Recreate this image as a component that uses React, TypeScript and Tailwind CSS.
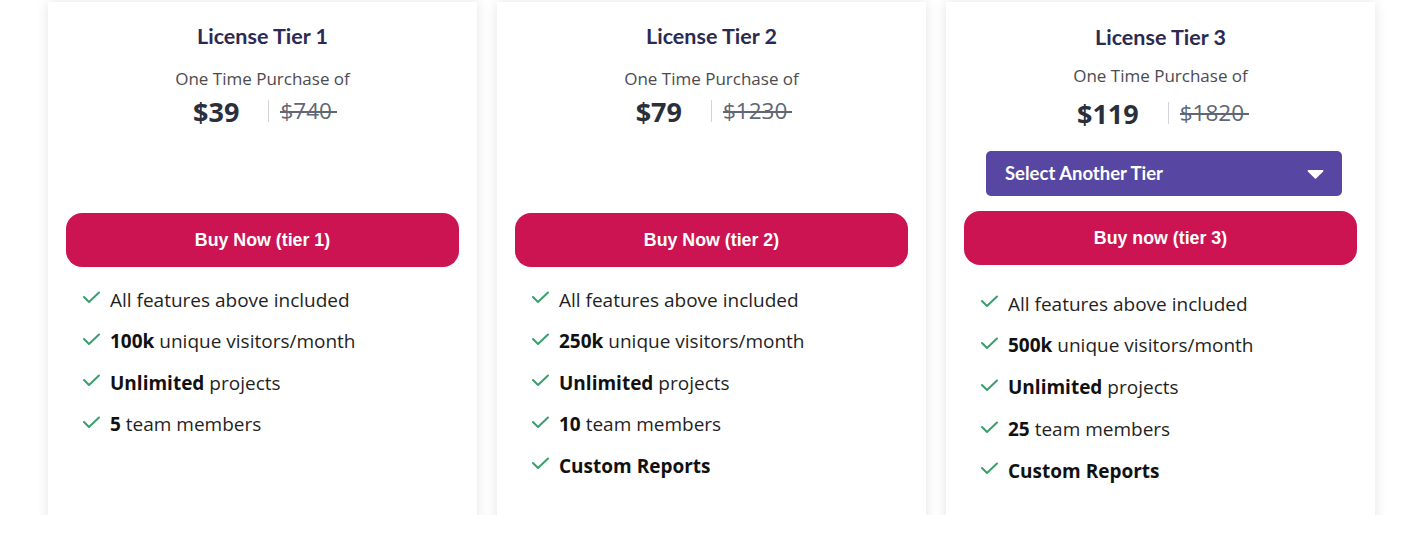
type Feature = {
  bold?: string
  text?: string
}

type Tier = {
  name: string
  price: string
  oldPrice: string
  buyLabel: string
  features: Feature[]
  withSelect?: boolean
}

const tiers: Tier[] = [
  {
    name: 'License Tier 1',
    price: '$39',
    oldPrice: '$740',
    buyLabel: 'Buy Now (tier 1)',
    features: [
      { text: 'All features above included' },
      { bold: '100k', text: ' unique visitors/month' },
      { bold: 'Unlimited', text: ' projects' },
      { bold: '5', text: ' team members' },
    ],
  },
  {
    name: 'License Tier 2',
    price: '$79',
    oldPrice: '$1230',
    buyLabel: 'Buy Now (tier 2)',
    features: [
      { text: 'All features above included' },
      { bold: '250k', text: ' unique visitors/month' },
      { bold: 'Unlimited', text: ' projects' },
      { bold: '10', text: ' team members' },
      { bold: 'Custom Reports' },
    ],
  },
  {
    name: 'License Tier 3',
    price: '$119',
    oldPrice: '$1820',
    buyLabel: 'Buy now (tier 3)',
    withSelect: true,
    features: [
      { text: 'All features above included' },
      { bold: '500k', text: ' unique visitors/month' },
      { bold: 'Unlimited', text: ' projects' },
      { bold: '25', text: ' team members' },
      { bold: 'Custom Reports' },
    ],
  },
]

function CheckIcon() {
  return (
    <svg width="17" height="13" viewBox="0 0 17 13" fill="none" className="mb-[4px] shrink-0">
      <polyline
        points="1,6 6,11 16,1.5"
        stroke="#3a9f6c"
        strokeWidth="2"
        strokeLinecap="round"
        strokeLinejoin="round"
      />
    </svg>
  )
}

function PriceRow({ price, oldPrice }: { price: string; oldPrice: string }) {
  return (
    <div className="flex h-[32px] items-center justify-center">
      <span className="font-['Open_Sans'] text-[27px] font-bold leading-none text-[#2b2f3c]">
        {price}
      </span>
      <span className="ml-[29px] h-[22px] w-px bg-[#d4d4d8]" />
      <span className="relative ml-[11px] font-['Open_Sans'] text-[22.5px] leading-none text-[#5f6675] after:absolute after:top-[52%] after:left-0 after:right-[-5px] after:h-[1.5px] after:bg-[#5f6675]">
        {oldPrice}
      </span>
    </div>
  )
}

function TierCard({ tier }: { tier: Tier }) {
  const isThird = !!tier.withSelect

  return (
    <div className="flex h-[560px] w-[429px] shrink-0 flex-col bg-white shadow-[0_0_12px_rgba(0,0,0,0.11)]">
      <h2
        className={`${isThird ? 'mt-[21px]' : 'mt-[20px]'} text-center font-['Lato'] text-[21.5px] leading-[28px] font-bold text-[#2c2a52]`}
      >
        {tier.name}
      </h2>

      <p
        className={`${isThird ? 'mt-[13px]' : 'mt-[17px]'} text-center font-['Open_Sans'] text-[17px] leading-[24px] text-[#4b4b4f]`}
      >
        One Time Purchase of
      </p>

      <div className={isThird ? 'mt-[9px]' : 'mt-[4px]'}>
        <PriceRow price={tier.price} oldPrice={tier.oldPrice} />
      </div>

      {isThird && (
        <button className="mt-[22px] ml-[40px] flex h-[45px] w-[356px] items-center justify-between rounded-[5px] bg-[#5747a3] pr-[18px] pl-[19px] font-['Lato'] text-[18.5px] font-bold text-white">
          Select Another Tier
          <svg width="17" height="10" viewBox="0 0 17 10">
            <path d="M1.5 1h14c.8 0 1.2.9.7 1.5L9.3 9.2a1 1 0 0 1-1.6 0L.8 2.5C.3 1.9.7 1 1.5 1z" fill="white" />
          </svg>
        </button>
      )}

      <button
        className={`${isThird ? 'mt-[15px]' : 'mt-[86px]'} mx-[18px] h-[54px] rounded-[16px] bg-[#cc1452] font-['Liberation_Sans'] text-[17.8px] font-bold text-white`}
      >
        {tier.buyLabel}
      </button>

      <ul className={`${isThird ? 'mt-[18px]' : 'mt-[12px]'} pl-[35px]`}>
        {tier.features.map((f, i) => (
          <li
            key={i}
            className={`flex ${isThird ? 'h-[41.75px]' : 'h-[41.5px]'} items-center gap-[10px] font-['Open_Sans'] text-[19px] text-[#1f1f23]`}
          >
            <CheckIcon />
            <span>
              {f.bold && <b className="font-bold text-[#111]">{f.bold}</b>}
              {f.text}
            </span>
          </li>
        ))}
      </ul>
    </div>
  )
}

export default function App() {
  return (
    <main className="h-[535px] w-[1411px] bg-white">
      <div className="flex h-[515px] gap-5 overflow-hidden pt-[2px] pl-[48px]">
        {tiers.map((tier) => (
          <TierCard key={tier.name} tier={tier} />
        ))}
      </div>
    </main>
  )
}
